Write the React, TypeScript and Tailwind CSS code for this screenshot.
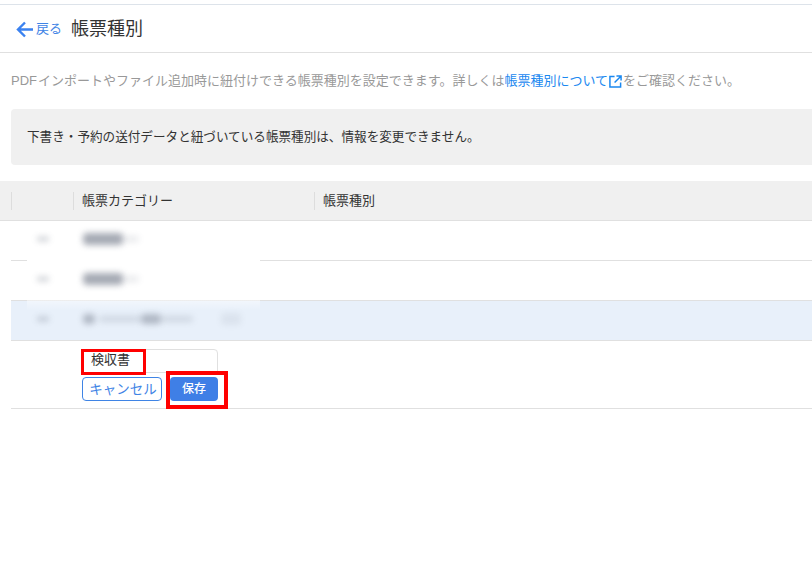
const font = "font-['Roboto','Noto_Sans_CJK_JP',sans-serif]"

const BlurBar = ({ className }: { className: string }) => (
  <div className={`rounded-sm bg-gray-500 blur-[3px] ${className}`} />
)

const Row = ({ highlight, children }: { highlight?: boolean; children: React.ReactNode }) => (
  <div className={`ml-[11px] flex h-10 items-center border-b border-[#e0e0e0] pb-1 ${highlight ? 'bg-[#e8f0fa]' : 'bg-white'}`}>
    <div className="relative z-10 w-[62px] pl-[26px]">
      <BlurBar className="h-1 w-3 opacity-40" />
    </div>
    <div className="relative z-10 flex items-center pl-[10px]">{children}</div>
  </div>
)

export default function App() {
  return (
    <div className={`${font} relative h-[573px] w-[812px] overflow-hidden bg-white pt-1`}>
      <header className="flex h-[49px] items-center border-y border-t-[#dde3ea] border-b-[#e0e0e0] pl-4">
        <svg className="h-[18px] w-[18px] text-[#3b82f0]" viewBox="0 0 18 18" fill="none" stroke="currentColor" strokeWidth="2.4">
          <path d="M17 9.5H2.5M9 2.5 2 9.5l7 7" />
        </svg>
        <span className="ml-0.5 text-[13px] text-[#3f84e5]">戻る</span>
        <h1 className="ml-[9px] text-[18px] text-[#333]">帳票種別</h1>
      </header>

      <p className="ml-[11px] mt-[18px] whitespace-nowrap text-[13px] leading-5 text-[#999]">
        <span className="mr-px font-['Liberation_Sans']">PDF</span>
        インポートやファイル追加時に紐付けできる帳票種別を設定できます。詳しくは
        <span className="text-[#1a88f0]">帳票種別について</span>
        <svg className="mx-px inline h-[13px] w-[13px] text-[#1a88f0]" viewBox="0 0 14 14" fill="none" stroke="currentColor" strokeWidth="1.6">
          <path d="M6 1.5H1v11.5h11.5V8M8 1h5v5M13 1 6 8" />
        </svg>
        をご確認ください。
      </p>

      <div className="ml-[11px] mt-[18px] flex h-[56px] items-center rounded-l bg-[#f0f0f0] pl-4 text-[12.6px] text-[#333]">
        下書き・予約の送付データと紐づいている帳票種別は、情報を変更できません。
      </div>

      <div className="mt-4 flex h-10 items-center border-b border-[#e0e0e0] bg-[#f0f0f0] pl-[11px] text-[13px] text-[#333]">
        <div className="h-[18px] w-[62px] border-l border-[#ddd]" />
        <div className="flex h-[18px] w-[241px] items-center border-l border-[#ddd] pl-2">帳票カテゴリー</div>
        <div className="flex h-[18px] items-center border-l border-[#ddd] pl-2">帳票種別</div>
      </div>

      <div className="relative">
        <div className="absolute left-[27px] top-[10px] h-[80px] w-[233px] bg-linear-to-b from-white from-70% to-transparent" />
        <Row>
          <BlurBar className="h-3 w-[40px] opacity-60" />
          <BlurBar className="h-1.5 w-4 opacity-15" />
        </Row>
        <Row>
          <BlurBar className="h-3 w-[40px] opacity-60" />
          <BlurBar className="h-1.5 w-4 opacity-15" />
        </Row>
        <Row highlight>
          <BlurBar className="h-2.5 w-3 opacity-45" />
          <BlurBar className="ml-1 h-1.5 w-[42px] opacity-20" />
          <BlurBar className="h-2.5 w-5 opacity-45" />
          <BlurBar className="h-1.5 w-8 opacity-20" />
          <BlurBar className="ml-7 h-3 w-5 opacity-10" />
        </Row>
      </div>

      <div className="ml-[11px] border-b border-[#e0e0e0] pb-[7px] pl-[71px] pt-2">
        <div className="flex h-6 w-[136px] items-center rounded-t border border-[#e0e0e0] pb-0.5 pl-2 text-[13px] text-[#333]">検収書</div>
        <div className="mt-1 flex gap-2">
          <button className="flex h-6 w-20 items-center justify-center rounded border border-[#3f84e5] pl-0.5 text-[13.5px] text-[#3f84e5]">キャンセル</button>
          <button className="flex h-6 w-12 items-center justify-center rounded bg-[#3f7fe6] text-xs font-medium text-white">保存</button>
        </div>
      </div>

      {/* red annotation boxes from the screenshot */}
      <div className="absolute left-[81px] top-[349px] h-[26px] w-[65px] border-[3px] border-[#f00]" />
      <div className="absolute left-[166px] top-[371px] h-[38px] w-[62px] border-4 border-[#f00]" />
    </div>
  )
}
